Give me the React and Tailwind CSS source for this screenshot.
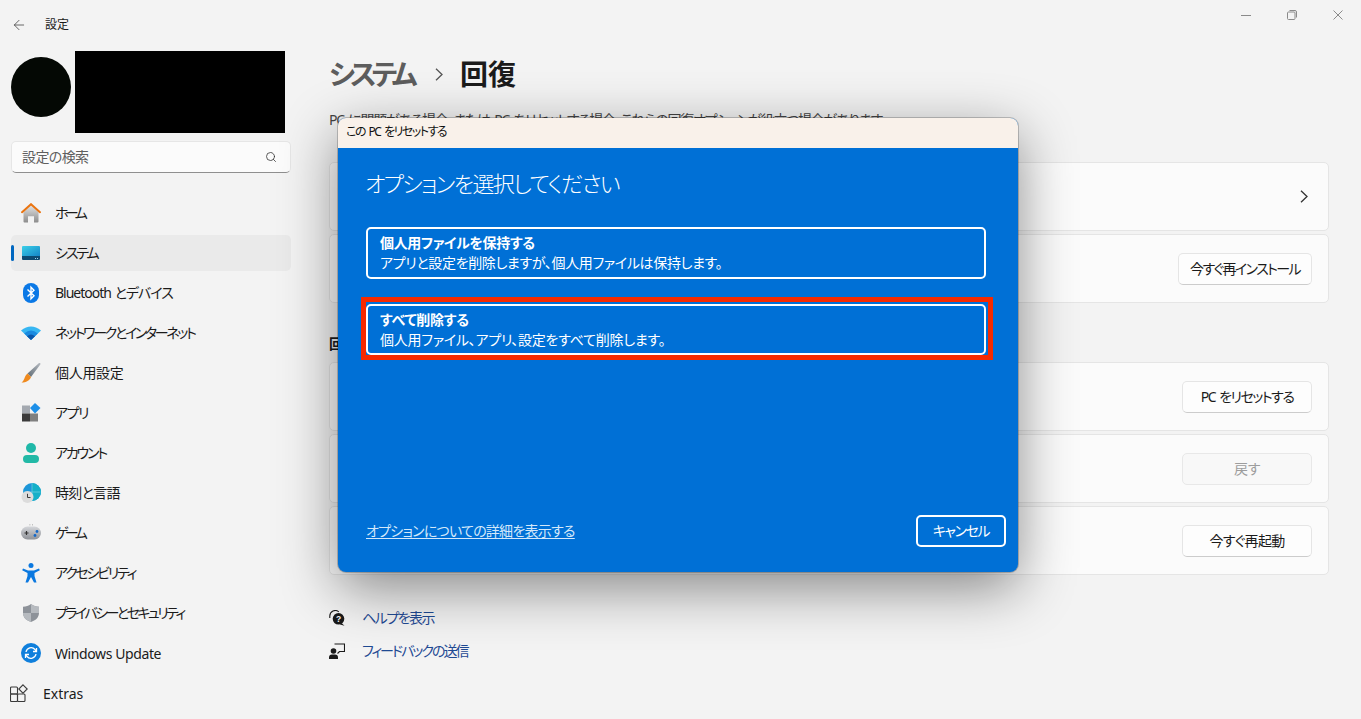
import React from 'react'
import { ArrowLeft, Search } from 'lucide-react'

const HomeIcon = () => (
  <svg width="20" height="20" viewBox="0 0 20 20">
    <defs>
      <linearGradient id="homeBody" x1="0" y1="0" x2="0" y2="1">
        <stop offset="0" stopColor="#e2e2e2" />
        <stop offset="1" stopColor="#8c8c8c" />
      </linearGradient>
    </defs>
    <path d="M2.500 9 10 2.500 17.500 9v9.500a1 1 0 0 1-1 1h-3.500v-6H7v6H3.500a1 1 0 0 1-1-1z" fill="url(#homeBody)" />
    <path d="M7 13.500h6v6H7z" fill="#f3f3f3" />
    <path d="M1 9.200 10 1.200l9 8" fill="none" stroke="#ea7410" strokeWidth="2" strokeLinecap="round" />
  </svg>
)

const SystemIcon = () => (
  <svg width="20" height="20" viewBox="0 0 20 20">
    <defs>
      <linearGradient id="sysBody" x1="0" y1="0" x2="1" y2="1">
        <stop offset="0" stopColor="#3bd0e8" />
        <stop offset="1" stopColor="#1586c8" />
      </linearGradient>
    </defs>
    <path d="M1 4a1 1 0 0 1 1-1h16a1 1 0 0 1 1 1v9H1z" fill="url(#sysBody)" />
    <path d="M1 13h18v3a1 1 0 0 1-1 1H2a1 1 0 0 1-1-1z" fill="#0d4b73" />
    <path d="M14 15h1v1h-1zM16 15h1v1h-1z" fill="#9fd4ea" />
  </svg>
)

const BluetoothIcon = () => (
  <svg width="20" height="20" viewBox="0 0 20 20">
    <rect x="2" y="0" width="16" height="20" rx="8" fill="#0a78e6" />
    <path d="M6.500 6.500 13 12.800 10 15.800V4.200L13 7.200 6.500 13.500" fill="none" stroke="#fff" strokeWidth="1.400" />
  </svg>
)

const WifiIcon = () => (
  <svg width="20" height="20" viewBox="0 0 20 20">
    <path d="M0 7.500Q10-.5 20 7.500L10 17z" fill="#37b6f2" />
    <path d="M3.200 10.500Q10 4.500 16.800 10.500L10 17z" fill="#1a8ae0" />
    <path d="M6 13.200Q10 10 14 13.200L10 17z" fill="#0a57ab" />
  </svg>
)

const BrushIcon = () => (
  <svg width="20" height="20" viewBox="0 0 20 20">
    <defs>
      <linearGradient id="brushHandle" x1="0" y1="1" x2="1" y2="0">
        <stop offset="0" stopColor="#5f6b75" />
        <stop offset="1" stopColor="#b5bac0" />
      </linearGradient>
    </defs>
    <path d="M6.500 10.500 17.500.5a1 1 0 0 1 1.800 1L10 14z" fill="url(#brushHandle)" />
    <path d="M6.500 10.500 10 14c-1 3.500-5 5.500-9.500 5.500C3.500 18 3.500 12.500 6.500 10.500z" fill="#ef8a1e" />
  </svg>
)

const AppsIcon = () => (
  <svg width="20" height="20" viewBox="0 0 20 20">
    <rect x="1" y="2.500" width="8" height="8" fill="#a4a9b0" />
    <rect x="1" y="10.500" width="8" height="8" fill="#3b3b3b" />
    <rect x="9" y="10.500" width="8" height="8" fill="#7f7f7f" />
    <path d="M14 0 19.500 5 14 10.500 9 5z" fill="#1d8fe8" />
  </svg>
)

const AccountIcon = () => (
  <svg width="20" height="20" viewBox="0 0 20 20">
    <circle cx="10" cy="5" r="5" fill="#1fb8a8" />
    <rect x="2" y="12" width="16" height="8" rx="4" fill="#22b9a6" />
  </svg>
)

const TimeIcon = () => (
  <svg width="20" height="20" viewBox="0 0 20 20">
    <circle cx="11" cy="9" r="9" fill="#1c96d8" />
    <path d="M11 0a9 9 0 0 1 0 18z" fill="#14b0c8" />
    <path d="M2.500 9h17M11 0v18" stroke="#7fd6e6" strokeWidth=".6" />
    <circle cx="6.500" cy="14" r="6" fill="#dcdcdc" />
    <path d="M6.500 10.800V14.500H9.500" fill="none" stroke="#3c3c3c" strokeWidth="1" />
  </svg>
)

const GameIcon = () => (
  <svg width="20" height="20" viewBox="0 0 20 20">
    <defs>
      <linearGradient id="padBody" x1="0" y1="0" x2="0" y2="1">
        <stop offset="0" stopColor="#d4d6da" />
        <stop offset="1" stopColor="#8f9298" />
      </linearGradient>
    </defs>
    <rect x="0" y="3.500" width="20" height="13" rx="6.500" fill="url(#padBody)" />
    <path d="M3.500 10h4M5.500 8v4" stroke="#333" strokeWidth="1.200" />
    <circle cx="14" cy="12.500" r="1.400" fill="#1468c8" />
    <circle cx="16" cy="8.500" r="1.400" fill="#1468c8" />
    <path d="M8.500 1.500h.8v.8h-.8zM11 1.500h.8v.8H11z" fill="#777" />
  </svg>
)

const AccessIcon = () => (
  <svg width="20" height="20" viewBox="0 0 20 20">
    <circle cx="10" cy="2.500" r="2.500" fill="#0a78e0" />
    <path d="M2 5.500 7 7.500H13L18 5.500 18.800 7.200 13.500 10V13L15.500 19.500H13L10 14 7 19.500H4.500L6.500 13V10L1.200 7.200z" fill="#0a78e0" />
  </svg>
)

const ShieldIcon = () => (
  <svg width="20" height="20" viewBox="0 0 20 20">
    <path d="M10 1c2.500 1.800 5 2.500 8 2.800V10c0 4.500-3.500 7.500-8 9-4.500-1.500-8-4.500-8-9V3.800C5 3.500 7.500 2.800 10 1z" fill="#8d9299" />
    <path d="M10 1c2.500 1.800 5 2.500 8 2.800V10h-8zM10 10H2c0 4.500 3.500 7.500 8 9z" fill="#b6babf" />
  </svg>
)

const UpdateIcon = () => (
  <svg width="20" height="20" viewBox="0 0 20 20">
    <circle cx="10" cy="10" r="10" fill="#0f7fdc" />
    <path d="M5 9a5.200 5.200 0 0 1 9-2.500L15 8M15 11a5.200 5.200 0 0 1-9 2.500L5 12" fill="none" stroke="#fff" strokeWidth="1.300" />
    <path d="M15.500 5v3.500H12M4.500 15v-3.500H8" fill="none" stroke="#fff" strokeWidth="1.300" />
  </svg>
)

const ExtrasIcon = () => (
  <svg width="18" height="18" viewBox="0 0 18 18" fill="none" stroke="#3a3a3a" strokeWidth="1.100">
    <rect x=".5" y="3" width="7" height="7" rx="1" />
    <rect x=".5" y="10" width="7" height="7.500" rx="1" />
    <rect x="7.500" y="10" width="7.500" height="7.500" rx="1" />
    <path d="M13 .8 17.200 5 13 9.200 8.800 5z" />
  </svg>
)

const HelpIcon = () => (
  <svg width="16" height="16" viewBox="0 0 16 16">
    <path d="M.8 8V6a5.500 5.500 0 0 1 9-4.200" fill="none" stroke="#1a1a1a" strokeWidth="1.100" />
    <circle cx="9.500" cy="8.800" r="5.800" fill="#1a1a1a" />
    <path d="M12.500 13 15.500 15.800 11 14.500z" fill="#1a1a1a" />
    <text x="9.500" y="11.800" textAnchor="middle" fontSize="8.500" fontWeight="700" fill="#fff" fontFamily="Liberation Sans">?</text>
  </svg>
)

const FeedbackIcon = () => (
  <svg width="16" height="16" viewBox="0 0 16 16">
    <circle cx="4.500" cy="8" r="2.800" fill="#1a1a1a" />
    <path d="M0 16v-1.500a3 3 0 0 1 3-3h3a3 3 0 0 1 3 3V16z" fill="#1a1a1a" />
    <path d="M5.500 1h10v7.500h-5L8.500 10.500" fill="none" stroke="#1a1a1a" strokeWidth="1.100" />
  </svg>
)

const Chevron = ({ className }) => (
  <svg width="8" height="13" viewBox="0 0 8 13" fill="none" stroke="currentColor" strokeWidth="1.300" className={className}>
    <path d="M1 .8 7 6.500 1 12.200" />
  </svg>
)

const navItems = [
  { label: 'ホーム', icon: <HomeIcon />, track: 'tracking-[-3.600px]' },
  { label: 'システム', icon: <SystemIcon />, active: true, track: 'tracking-[-2.100px]' },
  { label: 'Bluetooth とデバイス', icon: <BluetoothIcon />, track: 'tracking-[-1px] [word-spacing:1px]' },
  { label: 'ネットワークとインターネット', icon: <WifiIcon />, track: 'tracking-[-2.350px]' },
  { label: '個人用設定', icon: <BrushIcon />, track: 'tracking-[-0.300px]' },
  { label: 'アプリ', icon: <AppsIcon />, track: 'tracking-[-1.400px]' },
  { label: 'アカウント', icon: <AccountIcon />, track: 'tracking-[-2.200px]' },
  { label: '時刻と言語', icon: <TimeIcon />, track: 'tracking-[-0.700px]' },
  { label: 'ゲーム', icon: <GameIcon />, track: 'tracking-[-3.600px]' },
  { label: 'アクセシビリティ', icon: <AccessIcon />, track: 'tracking-[-2.250px]' },
  { label: 'プライバシーとセキュリティ', icon: <ShieldIcon />, track: 'tracking-[-2.550px]' },
  { label: 'Windows Update', icon: <UpdateIcon />, track: 'tracking-[-0.400px] translate-y-px' },
]

const Sidebar = () => (
  <aside className="w-[301px] shrink-0 pl-[11px] pr-[10px]">
    <div className="flex items-start h-[82px] mt-[3px]">
      <div className="w-[60px] h-[60px] mt-[6px] rounded-full bg-[#040804]" />
      <div className="w-[210px] h-[82px] ml-[4px] bg-black" />
    </div>
    <div className="flex items-center justify-between h-[32px] mt-[8px] pl-[10px] pr-[13px] bg-[#fbfbfb] border border-[#e6e6e6] border-b-[#8f8f8f] rounded-[5px]">
      <span className="text-[14px] leading-5 text-[#5f5f5f] tracking-[-0.6px]">設定の検索</span>
      <Search size={12} strokeWidth={1.6} className="text-[#333]" />
    </div>
    <nav className="flex flex-col gap-[4px] mt-[22px]">
      {navItems.map((item) => (
        <div key={item.label} className={`relative flex items-center h-[36px] pl-[10px] gap-[14px] rounded-[5px] ${item.active ? 'bg-[#eaeaea]' : ''}`}>
          {item.active && <span className="absolute left-0 top-[10px] h-[16px] w-[3px] rounded-full bg-[#0067c0]" />}
          {item.icon}
          <span className={`text-[14px] leading-5 text-[#1b1b1b] ${item.track}`}>{item.label}</span>
        </div>
      ))}
      <div className="flex items-center h-[36px] -ml-px gap-[15px]">
        <ExtrasIcon />
        <span className="text-[14px] leading-5 text-[#1b1b1b] translate-y-px">Extras</span>
      </div>
    </nav>
  </aside>
)

const Card = ({ children }) => (
  <div className="flex items-center justify-end h-[69px] pr-[16px] bg-[#fbfbfb] border border-[#e5e5e5] rounded-[5px]">
    {children}
  </div>
)

const Button = ({ children, wide, disabled, track }) => (
  <div className={`flex items-center justify-center h-[32px] border rounded-[5px] text-[14px] leading-5 ${track} ${wide ? 'w-[134px]' : 'w-[130px]'} ${disabled ? 'bg-[#f8f8f8] border-[#e8e8e8] text-[#9d9d9d]' : 'bg-[#fdfdfd] border-[#e5e5e5] border-b-[#cccccc] text-[#1b1b1b]'}`}>
    {children}
  </div>
)

const MainContent = () => (
  <main className="w-[1000px] ml-[28px]">
    <div className="flex items-center h-[40px] mt-[6px] text-[28px] leading-10 font-semibold">
      <span className="text-[#5d5d5d] tracking-[-4.800px]">システム</span>
      <Chevron className="ml-[22px] mr-[17px] text-[#555]" />
      <span className="text-[#1b1b1b]">回復</span>
    </div>
    <p className="mt-[16px] text-[14px] leading-5 text-[#444] tracking-[-1.250px] [word-spacing:2px]">PC に問題がある場合、または PC をリセットする場合、これらの回復オプションが役立つ場合があります。</p>
    <div className="flex flex-col gap-[3px] mt-[32px]">
      <Card>
        <Chevron className="mr-[4px] text-[#333]" />
      </Card>
      <Card>
        <Button wide track="tracking-[-1.600px]">今すぐ再インストール</Button>
      </Card>
    </div>
    <h2 className="mt-[31px] text-[14px] leading-5 font-semibold text-[#1b1b1b]">回復オプション</h2>
    <div className="flex flex-col gap-[3px] mt-[8px]">
      <Card>
        <Button track="tracking-[-1.500px] [word-spacing:2px]">PC をリセットする</Button>
      </Card>
      <Card>
        <Button disabled track="tracking-[-0.400px]">戻す</Button>
      </Card>
      <Card>
        <Button track="tracking-[-0.700px]">今すぐ再起動</Button>
      </Card>
    </div>
    <div className="flex flex-col gap-[13px] mt-[33px]">
      <div className="flex items-center gap-[17px] h-[20px]">
        <HelpIcon />
        <span className="text-[14px] leading-5 text-[#1f4a93] tracking-[-1.500px]">ヘルプを表示</span>
      </div>
      <div className="flex items-center gap-[17px] h-[20px]">
        <FeedbackIcon />
        <span className="text-[14px] leading-5 text-[#1f4a93] tracking-[-2px]">フィードバックの送信</span>
      </div>
    </div>
  </main>
)

const ResetDialog = () => (
  <div className="absolute left-[338px] top-[118px] flex flex-col w-[680px] h-[454px] rounded-[8px] bg-[#0070d6] ring-1 ring-black/20 shadow-[0_16px_56px_rgba(0,0,0,0.45)]">
    <div className="flex items-center h-[30px] pl-[8px] pb-[2px] rounded-t-[8px] bg-[#f9f1ea]">
      <span className="text-[12px] leading-4 text-[#111] tracking-[-1.500px] [word-spacing:2px]">この PC をリセットする</span>
    </div>
    <div className="flex flex-col flex-1 pl-[28px] pr-[32px] text-white">
      <h1 className="-ml-px mt-[19px] text-[22px] leading-8 font-light tracking-[-1.600px]">オプションを選択してください</h1>
      <div className="flex flex-col justify-center h-[52px] mt-[28px] pl-[12px] border-2 border-white rounded-[5px] tracking-[-0.35px]">
        <span className="text-[14px] leading-5 font-bold">個人用ファイルを保持する</span>
        <span className="text-[14px] leading-5">アプリと設定を削除しますが、個人用ファイルは保持します。</span>
      </div>
      <div className="relative flex flex-col justify-center h-[51px] mt-[25px] pl-[12px] border-2 border-white rounded-[5px] tracking-[-0.25px]">
        <span className="absolute -left-[7px] -top-[9px] -right-[9px] -bottom-[7px] border-[5px] border-[#f62a00]" />
        <span className="text-[14px] leading-5 font-bold">すべて削除する</span>
        <span className="text-[14px] leading-5">個人用ファイル、アプリ、設定をすべて削除します。</span>
      </div>
      <div className="flex items-center justify-between mt-auto mb-[25px] -mr-[20px]">
        <span className="text-[14px] leading-5 underline underline-offset-2 text-[#d4e8fa] tracking-[-0.75px]">オプションについての詳細を表示する</span>
        <div className="flex items-center justify-center w-[90px] h-[32px] border-2 border-white rounded-[5px] text-[14px] leading-5 tracking-[-1.400px]">キャンセル</div>
      </div>
    </div>
  </div>
)

export default function App() {
  return (
    <div className="relative w-[1361px] h-[719px] overflow-hidden bg-[#f3f3f3] font-['Noto_Sans','Noto_Sans_CJK_JP',sans-serif] [font-feature-settings:'palt']">
      <header className="flex items-center h-[48px] pt-[2px] pl-[11px]">
        <ArrowLeft size={16} strokeWidth={1.2} className="text-[#444]" />
        <span className="ml-[18px] text-[12px] leading-4 text-[#1b1b1b]">設定</span>
      </header>
      <div className="absolute right-[18px] top-[10px] flex items-center gap-[36px] text-[#8a8a8a]">
        <svg width="10" height="10" viewBox="0 0 10 10"><path d="M0 5.500h10" stroke="currentColor" /></svg>
        <svg width="10" height="10" viewBox="0 0 10 10" fill="none" stroke="currentColor"><rect x=".5" y="2" width="7.500" height="7.500" rx="1" /><path d="M2.500.5H8a1.500 1.500 0 0 1 1.500 1.500v5.500" /></svg>
        <svg width="10" height="10" viewBox="0 0 10 10"><path d="M.5.500l9 9M9.500.500l-9 9" stroke="currentColor" /></svg>
      </div>
      <div className="flex">
        <Sidebar />
        <MainContent />
      </div>
      <ResetDialog />
    </div>
  )
}
